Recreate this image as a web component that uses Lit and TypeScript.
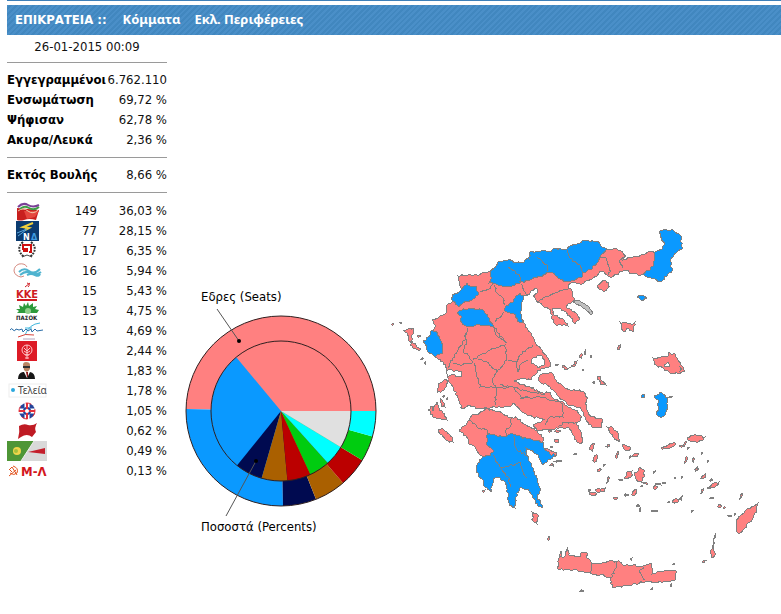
import { LitElement, html, svg, css } from "lit";
import { customElement } from "lit/decorators.js";

type Pt = [number, number];

/** "x,y x,y" -> list of points */
const parse = (s: string): Pt[] =>
  s.trim().split(/\s+/).map((p) => p.split(",").map(Number) as Pt);

const noise = (x: number, y: number): number => {
  const v = Math.sin(x * 12.9898 + y * 78.233) * 43758.5453;
  return v - Math.floor(v) - 0.5;
};

/** Breaks an edge into short steps so that a coast looks ragged. */
const roughEdge = (a: Pt, b: Pt, amp: number): Pt[] => {
  const len = Math.hypot(b[0] - a[0], b[1] - a[1]);
  if (len < 3) return [b];
  const n = Math.round(len / 2);
  const nx = -(b[1] - a[1]) / len;
  const ny = (b[0] - a[0]) / len;
  const out: Pt[] = [];
  for (let i = 1; i < n; i++) {
    const x = a[0] + ((b[0] - a[0]) * i) / n;
    const y = a[1] + ((b[1] - a[1]) * i) / n;
    const d = noise(Math.round(x), Math.round(y)) * amp * 2;
    out.push([x + nx * d, y + ny * d]);
  }
  out.push(b);
  return out;
};

const pathOf = (s: string, closed: boolean, amp = 1): string => {
  const pts = parse(s);
  const out: Pt[] = [pts[0]];
  for (let i = 1; i < pts.length; i++) out.push(...roughEdge(pts[i - 1], pts[i], amp));
  if (closed) out.push(...roughEdge(pts[pts.length - 1], pts[0], amp));
  return "M" + out.map((p) => p[0].toFixed(1) + " " + p[1].toFixed(1)).join("L") + (closed ? "Z" : "");
};

/** A small uneven island round a centre, leaning to the north-east. */
const isletPath = ([x, y, rx, ry]: number[]): string => {
  const pts: string[] = [];
  for (let i = 0; i < 7; i++) {
    const t = (i / 7) * 2 * Math.PI;
    const k = 0.95 + noise(x + i * 3, y + i) * 0.9;
    const dy = ry * k * Math.sin(t);
    pts.push(`${(x + rx * k * Math.cos(t) - dy * 0.3).toFixed(1)} ${(y + dy).toFixed(1)}`);
  }
  return "M" + pts.join("L") + "Z";
};

const PINK_LAND = [
  // mainland
  `458,276 468,275 477,275 488,272 491,271 498,264 520,266 540,256 570,250 598,250 607,249 613,249 620,250
   625,255 623,260 630,257 641,255 651,251 654,253 660,262 655,270 643,274 640,276 632,273 624,270 622,272 616,274
   612,277 607,275 604,272 600,271 597,276 590,279 584,283 580,284 574,282 571,283 568,286 573,293 574,300 568,304
   566,307 572,311 577,314 579,320 575,324 571,318 566,312 561,309 552,309 553,313 558,317 564,320 568,326 556,325
   552,319 551,310 545,308 540,303 536,300 533,296 537,293 537,289 532,290 528,295 524,296 521,305 521,317 524,323
   530,332 535,342 542,350 550,362 551,366 545,368 538,370 535,375
   530,380 525,378 520,379 514,381 522,384 530,387 540,392 545,393 550,392 553,398 563,402 567,406 575,410 582,417
   578,422 577,425 580,430 583,440 581,444 577,442 572,433 569,428 562,427 553,429 545,430 537,430 533,425 537,423
   545,420 542,418 533,417 527,415 520,410 513,403 509,407 495,407 480,409 468,405 462,409 458,398 453,387 448,380
   447,374 447,368 443,362 435,357 438,345 433,330 435,325 432,320 440,316 446,313
   447,305 452,302 453,296 462,290 459,284`,
  // Peloponnese
  `459,430 466,425 470,420 472,415 477,415 483,411 488,409 495,411 502,413 508,417 517,418 524,424 530,427 537,431
   544,438 543,443 530,445 500,460 484,457 480,455 475,447 468,442 466,436`,
  `544,448 550,450 557,453 556,455 548,454`,
  // Evia
  `538,378 542,374 552,373 557,382 570,390 583,391 588,398 585,403 588,412 592,417 602,419 602,427 592,427 586,420
   583,412 580,407 570,406 563,400 557,395 553,390 547,385 540,382`,
  // Crete
  `559,558 561,551 562,557 565,556 567,547 569,555 580,557 582,552 587,553 586,557 590,560 592,564 602,563 609,561
   622,562 623,565 633,565 640,567 646,565 652,564 652,574 660,572 667,571 673,570 677,572 675,580 663,582 645,582
   627,586 612,587 611,578 600,575 592,574 573,570 558,569`,
  // Ionian
  `403,330 413,328 414,331 411,337 413,343 421,349 419,351 413,348 408,338 407,333`,
  `437,393 438,385 444,380 448,381 445,388 442,391`,
  `428,410 432,406 433,411 437,402 439,408 443,413 447,420 440,418 433,417`,
  `440,398 443,402 445,407 441,406`,
  `438,430 442,428 452,437 453,442 448,441 442,435`,
  // Aegean
  `598,285 603,280 609,283 608,288 604,292 599,289`,
  `620,322 627,323 632,325 636,321 633,332 629,329 623,331`,
  `653,358 659,357 667,357 668,353 675,354 677,358 681,365 685,371 680,374 670,373 664,369 654,364`,
  `661,448 668,445 675,443 674,446 666,449`,
  `687,438 695,434 705,437 703,440 697,443 690,441`,
  `607,427 612,427 619,435 619,442 614,438`,
  `622,445 630,447 629,451 624,449`,
  `597,377 600,376 602,381 606,385 601,385`,
  `562,366 569,368 565,370`,
  `571,366 577,361 575,366`,
  `758,503 757,510 750,522 745,528 740,533 737,532 736,520 745,511`,
  `716,533 713,547 716,554 712,558 711,550 714,540`,
  `702,562 707,560 703,563`,
  `532,512 538,515 537,524 533,521`,
  `707,488 712,484 719,482 716,486 709,489`,
  `634,473 638,471 640,467 644,470 644,477 640,482 636,479`,
  `624,478 628,471 632,471 631,477 627,479`,
];

const BLUE_LAND = [
  // Pella, Kilkis, Serres, Drama
  `490,271 494,268 498,262 508,260 520,263 529,259 530,252 538,251 549,252 556,248 566,250 570,246 580,243 584,240
   590,242 598,241 602,247 607,249 600,257 598,262 590,270 583,272 582,277 568,282 558,278 553,273 547,272 540,277
   530,280 520,283 512,286 502,286 493,283 489,283 491,277`,
  // Evros
  `662,249 665,243 660,237 659,232 664,229 674,231 681,236 682,249 676,253 671,259 672,271 668,274 661,282 655,279
   648,278 643,273 650,270 654,264 654,253`,
  `452,300 452,295 457,294 462,289 467,283 470,286 477,287 478,295 472,300 463,303 459,307`,
  `457,313 462,310 473,308 483,310 488,317 493,327 480,325 468,327 462,323 461,316`,
  `520,293 524,297 521,305 521,317 524,323 517,321 516,315 510,313 504,310 506,306 513,302 516,296`,
  `432,330 438,333 440,339 443,345 443,353 435,357 428,352 427,346 423,342 430,335`,
  // southern Peloponnese
  `487,435 493,434 502,437 512,433 517,436 533,440 543,442 544,448 550,454 557,455 548,460 543,465 538,455 532,450
   526,448 527,455 532,467 537,478 541,490 537,497 543,507 538,506 533,498 528,489 520,488 516,497 515,508 509,505
   508,493 505,482 498,477 493,480 491,492 485,487 483,480 476,472 477,465 483,457 491,455 493,450 487,445`,
  // Chios, Samothrace, Psara
  `654,396 662,393 667,398 667,407 665,415 660,417 656,413 659,410 658,400`,
  `637,297 641,295 647,298 642,301`,
  `641,396 643,394 645,397 642,398`,
];

const BAYS = [
  `446,370 450,369 453,371 457,370 461,371 462,376 456,377 452,374 447,376`,
  `532,359 536,358 538,355 542,356 545,360 545,364 541,366 538,368 535,365 531,363`,
  `664,365 668,362 670,365 667,367`,
  `680,367 682,369 680,371`,
];

const BORDERS = [
  `508,267 515,271 520,277 521,283`,
  `537,257 547,265 548,271`,
  `567,250 570,258 580,265 583,272`,
  `600,257 606,258 607,263 610,268 609,275`,
  `625,255 620,260 623,268`,
  `480,292 485,291 491,288 492,283`,
  `495,285 496,292 502,297 505,305`,
  `504,312 495,322`,
  `495,328 496,335 507,343`,
  `467,328 465,340 458,350 450,363 448,368`,
  `521,284 524,291 528,295`,
  `538,303 545,297 558,292 568,289`,
  `465,333 466,342 463,352 467,353 473,362`,
  `453,363 462,365 473,362`,
  `473,360 482,354 490,350 505,345 507,360 497,372 487,362 478,359`,
  `475,363 477,377 480,387 490,387 495,388 513,387 520,395 523,398 530,397`,
  `497,388 496,396 495,405`,
  `497,372 492,380 495,388`,
  `508,360 517,362 518,372 520,365 528,360`,
  `493,326 505,342`,
  `518,362 520,355 533,345`,
  `520,398 540,397 553,400 563,403`,
  `500,385 515,388 530,392 545,394`,
  `563,404 563,417 550,417 545,425`,
  `558,427 565,422 578,423`,
  `470,420 478,428 487,430 488,435`,
  `512,418 511,425 506,430 506,436`,
  `513,436 517,450 527,455`,
  `493,455 500,467 508,477 510,487`,
  `500,467 508,467 520,462 523,472 527,478`,
  `592,564 591,574`,
  `617,562 616,568 611,578`,
  `644,567 639,572 645,580`,
];

/** Small islands: cx, cy, rx, ry */
const ISLETS: number[][] = [
  [592, 447, 2, 4], [596, 458, 2, 4], [599, 470, 2, 2], [608, 480, 1, 3], [593, 494, 3, 2], [598, 491, 3, 2],
  [603, 490, 2, 2], [589, 490, 1, 1], [616, 498, 2, 1], [626, 495, 2, 1], [634, 493, 2, 4], [638, 506, 2, 1],
  [640, 510, 1, 2], [654, 511, 3, 1], [621, 480, 2, 1], [654, 472, 1, 1], [645, 483, 3, 1], [642, 486, 1, 1],
  [655, 488, 3, 2], [659, 484, 3, 1], [664, 483, 2, 1], [682, 477, 1, 1], [675, 478, 1, 1], [676, 501, 3, 2],
  [681, 498, 1, 2], [669, 502, 1, 1], [617, 455, 1, 3], [608, 446, 2, 1], [636, 455, 3, 2], [630, 457, 1, 1],
  [703, 477, 2, 3], [697, 469, 2, 2], [686, 460, 1, 3], [693, 460, 1, 2], [712, 498, 2, 1], [720, 506, 2, 2],
  [724, 508, 1, 1], [741, 496, 1, 3], [730, 516, 2, 1], [735, 514, 1, 1], [682, 446, 2, 1], [685, 444, 1, 2],
  [702, 453, 1, 1], [708, 461, 1, 1], [692, 511, 1, 1], [711, 480, 1, 1], [702, 491, 1, 2], [552, 465, 2, 1],
  [558, 461, 3, 1], [557, 441, 2, 2], [552, 447, 1, 1], [557, 431, 3, 1], [550, 431, 2, 1], [582, 591, 2, 1],
  [549, 538, 1, 2], [631, 559, 1, 1], [652, 589, 1, 1], [671, 585, 1, 1], [674, 564, 1, 1], [393, 324, 1, 1],
  [401, 323, 1, 1], [422, 359, 1, 1], [425, 363, 1, 1], [444, 396, 1, 1], [447, 399, 1, 1], [619, 347, 1, 2],
  [557, 365, 2, 1], [581, 356, 1, 2], [585, 353, 1, 2], [591, 356, 1, 1], [583, 370, 1, 1], [594, 382, 1, 1],
  [670, 397, 2, 1], [419, 336, 2, 1], [484, 491, 1, 1], [575, 454, 1, 1], [604, 465, 1, 1], [688, 448, 1, 1],
];

const PIE = { x: 281, y: 411, outer: 95, inner: 70 };
const COLORS = ["#ff8080", "#0a99ff", "#000a50", "#aa6000", "#bb0000", "#00cc10", "#00ffff", "#e0e0e0"];
const SEATS = [149, 77, 17, 16, 15, 13, 13];
const SHARES = [36.03, 28.15, 6.35, 5.94, 5.43, 4.75, 4.69, 8.66];

/** Pie sectors, counter-clockwise from three o'clock. */
const sectors = (values: number[], r: number) => {
  const total = values.reduce((a, b) => a + b, 0);
  const at = (v: number) => {
    const t = (v / total) * 2 * Math.PI;
    return `${(PIE.x + r * Math.cos(t)).toFixed(2)} ${(PIE.y - r * Math.sin(t)).toFixed(2)}`;
  };
  let sum = 0;
  return values.map((v, i) => {
    const from = at(sum);
    sum += v;
    return svg`<path fill=${COLORS[i]} d=${`M${PIE.x} ${PIE.y}L${from}A${r} ${r} 0 ${v > total / 2 ? 1 : 0} 0 ${at(sum)}Z`}></path>`;
  });
};

const LOGOS = [
  svg`<path fill="#c8201e" d="M10 7L32 9L29 19Q22 17 17 19Q13 20 10 19Z"/><path fill="#e5483f" d="M17 10L32 10L28 16L20 18Z"/>
      <path fill="none" stroke="#7a3f96" stroke-width="2" d="M11 6Q16 1 21 4T32 4"/>
      <path fill="none" stroke="#3c9c46" stroke-width="2" d="M13 8Q17 4 22 7T32 6"/>
      <path fill="none" stroke="#f1c9a8" d="M11 10Q16 6 21 10T31 9"/>`,
  svg`<rect x="9" y="0" width="23" height="20" fill="#0b3b70"/><path fill="none" stroke="#f0cf3c" stroke-width="2" d="M26 2L16 6L22 7L18 9"/>
      <path fill="none" stroke="#5ba8dd" d="M19 9L11 15M20 8L10 12"/>
      <text x="16" y="19" font-size="9" font-weight="bold" fill="#fff">Ν</text><text x="24" y="19" font-size="9" font-weight="bold" fill="#3f9be0">Δ</text>`,
  svg`<path fill="none" stroke="#333" stroke-width="2" stroke-dasharray="2 1" d="M16 1Q8 8 17 16M24 1Q32 8 23 16"/>
      <path fill="none" stroke="#444" d="M15 16L20 14L25 16"/>
      <path fill="none" stroke="#d01010" stroke-width="2" d="M16 10H20V8H16V4H24V11H22"/>`,
  svg`<path fill="none" stroke="#d58a80" d="M20 6Q18 2 12 3Q7 5 7 10Q8 15 14 16L17 15"/>
      <path fill="none" stroke="#4fb3cf" stroke-width="2" d="M12 11Q17 6 22 10T33 8M13 14Q19 9 24 12T34 11M20 14Q24 12 28 14T33 13"/>`,
  svg`<text x="9" y="17" font-size="11" font-weight="bold" fill="#cf1b22">ΚΚΕ</text>
      <path fill="none" stroke="#cf1b22" d="M18 6L23 2M20 2Q24 3 21 6"/><path stroke="#cf1b22" stroke-width="2" d="M10 19H30"/>`,
  svg`<path fill="#2d9a3b" d="M10 12L12 10L9 8L13 8L12 4L16 6L17 2L19 5L21 1L22 5L26 2L26 6L30 5L28 8L32 9L30 12Z"/>
      <circle cx="21" cy="10" r="3" fill="#8fcf8a"/>
      <text x="9" y="19" font-size="6" font-weight="bold" fill="#222">ΠΑΣΟΚ</text>`,
  svg`<path fill="none" stroke="#3fb6dc" d="M18 14Q22 3 33 2M18 7H25"/>
      <path fill="none" stroke="#2d6fa8" d="M3 9Q5 6 6 9Q8 11 9 8L12 9L15 8L16 11L19 8L21 10L24 8L25 11L28 8L30 10L36 9"/>
      <path fill="none" stroke="#d8443c" d="M11 16Q18 12 27 14"/><path stroke="#b8a3bd" d="M16 18H28"/>`,
  svg`<rect x="10" y="0" width="20" height="20" fill="#dd1b26"/><g fill="none" stroke="#ffc8c8"><circle cx="20" cy="9" r="5"/>
      <path d="M20 4V18M17 7L20 10L23 7M18 14H22M18 17H22M17 10L20 12L23 10"/></g>`,
  svg`<path fill="#161616" d="M11 18Q11 12 16 11L23 11Q28 12 28 18Z"/><path fill="#b98563" d="M16 4Q16 1 19 1Q23 1 23 4V8Q20 13 17 9Z"/>
      <path fill="#333" d="M16 5H23V7H16Z"/><path fill="#fff" d="M17 11L20 17L23 11Z"/><path fill="#8a1515" d="M19 11H21V16H20Z"/>`,
  svg`<rect x="2" y="3" width="37" height="13" fill="none" stroke="#eee"/><circle cx="6" cy="9" r="2" fill="#2ba8dd"/>
      <text class="light" x="11" y="13" font-size="10" fill="#444">Τελεία</text>`,
  svg`<circle cx="20" cy="10" r="8" fill="#24439a"/><path stroke="#fff" stroke-width="5" d="M12 10H28M20 2V18"/><circle cx="20" cy="10" r="4" fill="#24439a"/>
      <path stroke="#e4303a" stroke-width="2" d="M12 10H28M20 2V18"/><circle cx="20" cy="10" r="8" fill="none" stroke="#e4303a" stroke-dasharray="6 6"/>
      <circle cx="20" cy="10" r="2" fill="#fff"/>`,
  svg`<path fill="#bf1b24" d="M12 5Q17 2 21 4Q26 5 30 2Q27 7 29 11L25 16Q20 12 14 16L11 18Q13 11 12 5Z"/>`,
  svg`<rect width="40" height="20" fill="#d9d9d9"/><path fill="#4e9636" d="M0 0H27L14 20H0Z"/><circle cx="10" cy="10" r="4" fill="#efd54a"/>
      <circle cx="9" cy="10" r="2" fill="#a6bf3b"/><path fill="#c41f2c" d="M21 11L38 7V13Z"/><path stroke="#eee" d="M27 0L14 20"/>`,
  svg`<path fill="none" stroke="#e2521d" d="M2 15L9 9M6 5Q12 7 10 12Q7 15 3 12M2 9L5 6L10 14M3 9L5 11"/>
      <text x="14" y="15" font-size="13" font-weight="bold" fill="#d3171c">Μ-Λ</text>`,
];

const PARTIES: [string, string, string][] = [
  ["ΣΥΡΙΖΑ", "149", "36,03 %"], ["ΝΔ", "77", "28,15 %"], ["Χρυσή Αυγή", "17", "6,35 %"],
  ["Το Ποτάμι", "16", "5,94 %"], ["ΚΚΕ", "15", "5,43 %"], ["ΠΑΣΟΚ", "13", "4,75 %"],
  ["Ανεξάρτητοι Έλληνες", "13", "4,69 %"], ["Κίνημα", "", "2,44 %"], ["Ένωση Κεντρώων", "", "1,83 %"],
  ["Τελεία", "", "1,78 %"], ["ΛΑΟΣ", "", "1,05 %"], ["ΑΝΤΑΡΣΥΑ", "", "0,62 %"],
  ["Πράσινοι", "", "0,49 %"], ["Μ-Λ", "", "0,13 %"],
];

const TURNOUT = [
  ["Εγγεγραμμένοι", "6.762.110"],
  ["Ενσωμάτωση", "69,72 %"],
  ["Ψήφισαν", "62,78 %"],
  ["Ακυρα/Λευκά", "2,36 %"],
];

const FONT = css`"DejaVu Sans Condensed", "Noto Sans", sans-serif`;

@customElement("results-sidebar")
class ResultsSidebar extends LitElement {
  static styles = css`
    :host { display: block; font: 13px/20px ${FONT}; color: #111; }
    time { display: block; height: 20px; line-height: 24px; text-align: center; }
    hr { margin: 7px 0 6px; border: 0; height: 1px; border-top: 1px solid #9a9a9a; }
    table { width: 100%; border-collapse: collapse; }
    .parties { margin-top: 7px; }
    th, td { padding: 0; height: 20px; white-space: nowrap; }
    th { text-align: left; color: #000; }
    td { text-align: right; }
    .party { width: 40px; }
    .seats { width: 50px; }
    .logo { display: block; width: 40px; height: 20px; }
    .light { font-family: "Noto Sans", sans-serif; font-weight: normal; }
  `;

  private facts(rows: string[][]) {
    return html`<table>
      <tbody>${rows.map(([name, value]) => html`<tr><th scope="row">${name}</th><td>${value}</td></tr>`)}</tbody>
    </table>`;
  }

  render() {
    return html`
      <time datetime="2015-01-26T00:09">26-01-2015 00:09</time>
      <hr />
      ${this.facts(TURNOUT)}
      <hr />
      ${this.facts([["Εκτός Βουλής", "8,66 %"]])}
      <hr />
      <table class="parties">
        <tbody>
          ${PARTIES.map(
            ([name, seats, share], i) => html`<tr>
              <th class="party" scope="row">
                <svg class="logo" viewBox="0 0 40 20" role="img" aria-label=${name}>${LOGOS[i]}</svg>
              </th>
              <td class="seats">${seats}</td>
              <td>${share}</td>
            </tr>`
          )}
        </tbody>
      </table>
    `;
  }
}

@customElement("seats-chart")
class SeatsChart extends LitElement {
  static styles = css`
    :host { display: block; }
    svg { display: block; width: 100%; font: 13px ${FONT}; }
    .ring { fill: none; stroke: #302020; stroke-width: 1px; }
    .lead { stroke: #555; stroke-width: 1px; }
  `;

  render() {
    return html`<svg viewBox="167 35 218 565" role="img" aria-label="Εδρες και ποσοστά">
      ${sectors(SEATS, PIE.outer)}
      <circle class="ring" cx=${PIE.x} cy=${PIE.y} r=${PIE.outer}></circle>
      ${sectors(SHARES, PIE.inner)}
      <circle class="ring" cx=${PIE.x} cy=${PIE.y} r=${PIE.inner}></circle>
      <path class="lead" d="M217 309L239 341M226 516L256 461"></path>
      <circle cx="239" cy="341" r="2"></circle>
      <circle cx="256" cy="461" r="2"></circle>
      <text x="201" y="301">Εδρες (Seats)</text>
      <text x="201" y="531">Ποσοστά (Percents)</text>
    </svg>`;
  }
}

@customElement("region-map")
class RegionMap extends LitElement {
  static styles = css`
    :host { display: block; }
    svg { display: block; width: 100%; shape-rendering: crispEdges; }
    path { stroke: #808080; stroke-width: 1px; }
    .left { fill: #ff8080; }
    .right { fill: #0a99ff; }
    .athos { fill: #c0c0c0; }
    .border { fill: none; }
    .bay { fill: #fff; }
  `;

  render() {
    return html`<svg viewBox="385 35 396 565" role="img" aria-label="Χάρτης εκλογικών περιφερειών">
      ${PINK_LAND.map((p) => svg`<path class="left" d=${pathOf(p, true)}></path>`)}
      ${BLUE_LAND.map((p) => svg`<path class="right" d=${pathOf(p, true)}></path>`)}
      <path class="athos" d=${pathOf("573,302 578,300 583,303 588,306 593,313 591,315 586,310 581,306 576,304", true, 0.5)}></path>
      ${BORDERS.map((p) => svg`<path class="border" d=${pathOf(p, false)}></path>`)}
      ${BAYS.map((p) => svg`<path class="bay" d=${pathOf(p, true)}></path>`)}
      ${ISLETS.map((p) => svg`<path class="left" d=${isletPath(p)}></path>`)}
    </svg>`;
  }
}

@customElement("app-root")
class AppRoot extends LitElement {
  static styles = css`
    :host { display: block; padding-left: 7px; background: #fff; font: 13px/20px ${FONT}; }
    header { border-top: 1px solid #3d7fb8; }
    nav {
      display: flex;
      align-items: center;
      gap: 14px;
      height: 30px;
      margin-top: 4px;
      padding: 0 8px;
      box-sizing: border-box;
      background: repeating-linear-gradient(135deg, #4a8fc8 0 2px, #4187bf 2px 4px);
      color: #fff;
      font-weight: bold;
    }
    h1 { margin: 0; padding-right: 2px; font-size: 13px; }
    a { color: inherit; text-decoration: none; line-height: 20px; padding-bottom: 3px; font-family: "Noto Sans", sans-serif; }
    main { display: grid; grid-template-columns: 160px 218fr 396fr; align-items: start; }
  `;

  render() {
    return html`
      <header>
        <nav>
          <h1>ΕΠΙΚΡΑΤΕΙΑ ::</h1>
          <a href="#parties">Κόμματα</a>
          <a href="#regions">Εκλ. Περιφέρειες</a>
        </nav>
      </header>
      <main>
        <results-sidebar></results-sidebar>
        <seats-chart></seats-chart>
        <region-map></region-map>
      </main>
    `;
  }
}
